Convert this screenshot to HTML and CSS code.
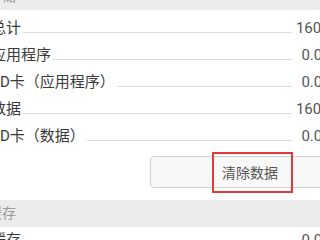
FILE: index.html
```html
<!DOCTYPE html>
<html lang="zh-CN">
<head>
<meta charset="utf-8">
<link rel="stylesheet" href="styles.css">
</head>
<body>
<div class="screen">
  <div class="band band-top">存储</div>
  <div class="list list-first">
    <div class="row"><span class="label">总计</span><span class="leader"></span><span class="value">160KB</span></div>
    <div class="row"><span class="label">应用程序</span><span class="leader"></span><span class="value">0.00B</span></div>
    <div class="row"><span class="label">SD卡（应用程序）</span><span class="leader"></span><span class="value">0.00B</span></div>
    <div class="row"><span class="label">数据</span><span class="leader"></span><span class="value">160KB</span></div>
    <div class="row"><span class="label">SD卡（数据）</span><span class="leader"></span><span class="value">0.00B</span></div>
  </div>
  <div class="actions">
    <button class="btn">清除数据<span class="mark"></span></button>
  </div>
  <div class="band">缓存</div>
  <div class="list">
    <div class="row"><span class="label">缓存</span><span class="leader"></span><span class="value">0.00B</span></div>
  </div>
</div>
</body>
</html>
```
FILE: styles.css
```css
html, body {
  margin: 0;
  padding: 0;
}
body {
  width: 320px;
  height: 240px;
  overflow: hidden;
  background: #ffffff;
  font-family: Roboto, "Noto Sans CJK SC", sans-serif;
}
.screen {
  margin-left: -12px;
  width: 372px;
}
.band {
  height: 27px;
  line-height: 27px;
  background: #ececec;
  color: #9a9a9a;
  font-size: 14px;
  white-space: nowrap;
}
.band-top {
  margin-top: -17px;
}
.list {
  padding: 0 20px 0 3px;
}
.list-first {
  padding-top: 5px;
}
.row {
  display: flex;
  align-items: baseline;
  height: 27px;
  line-height: 27px;
  font-size: 15px;
  color: #3a3a3a;
}
.label {
  white-space: nowrap;
}
.leader {
  flex: 1;
  height: 0;
  margin: 0 2px;
  border-bottom: 1px solid #dedede;
}
.value {
  width: 46px;
  text-align: right;
  color: #555555;
  white-space: nowrap;
}
.actions {
  padding: 6px 0 12px 162px;
}
.btn {
  position: relative;
  display: block;
  width: 200px;
  height: 32px;
  padding: 0;
  border: 1px solid #d2d2d2;
  border-radius: 4px;
  background: #f8f8f8;
  color: #555555;
  font-family: inherit;
  font-size: 14px;
}
.mark {
  position: absolute;
  left: 61px;
  top: -5px;
  width: 81px;
  height: 41px;
  box-sizing: border-box;
  border: 2px solid #e03a3a;
}
```
